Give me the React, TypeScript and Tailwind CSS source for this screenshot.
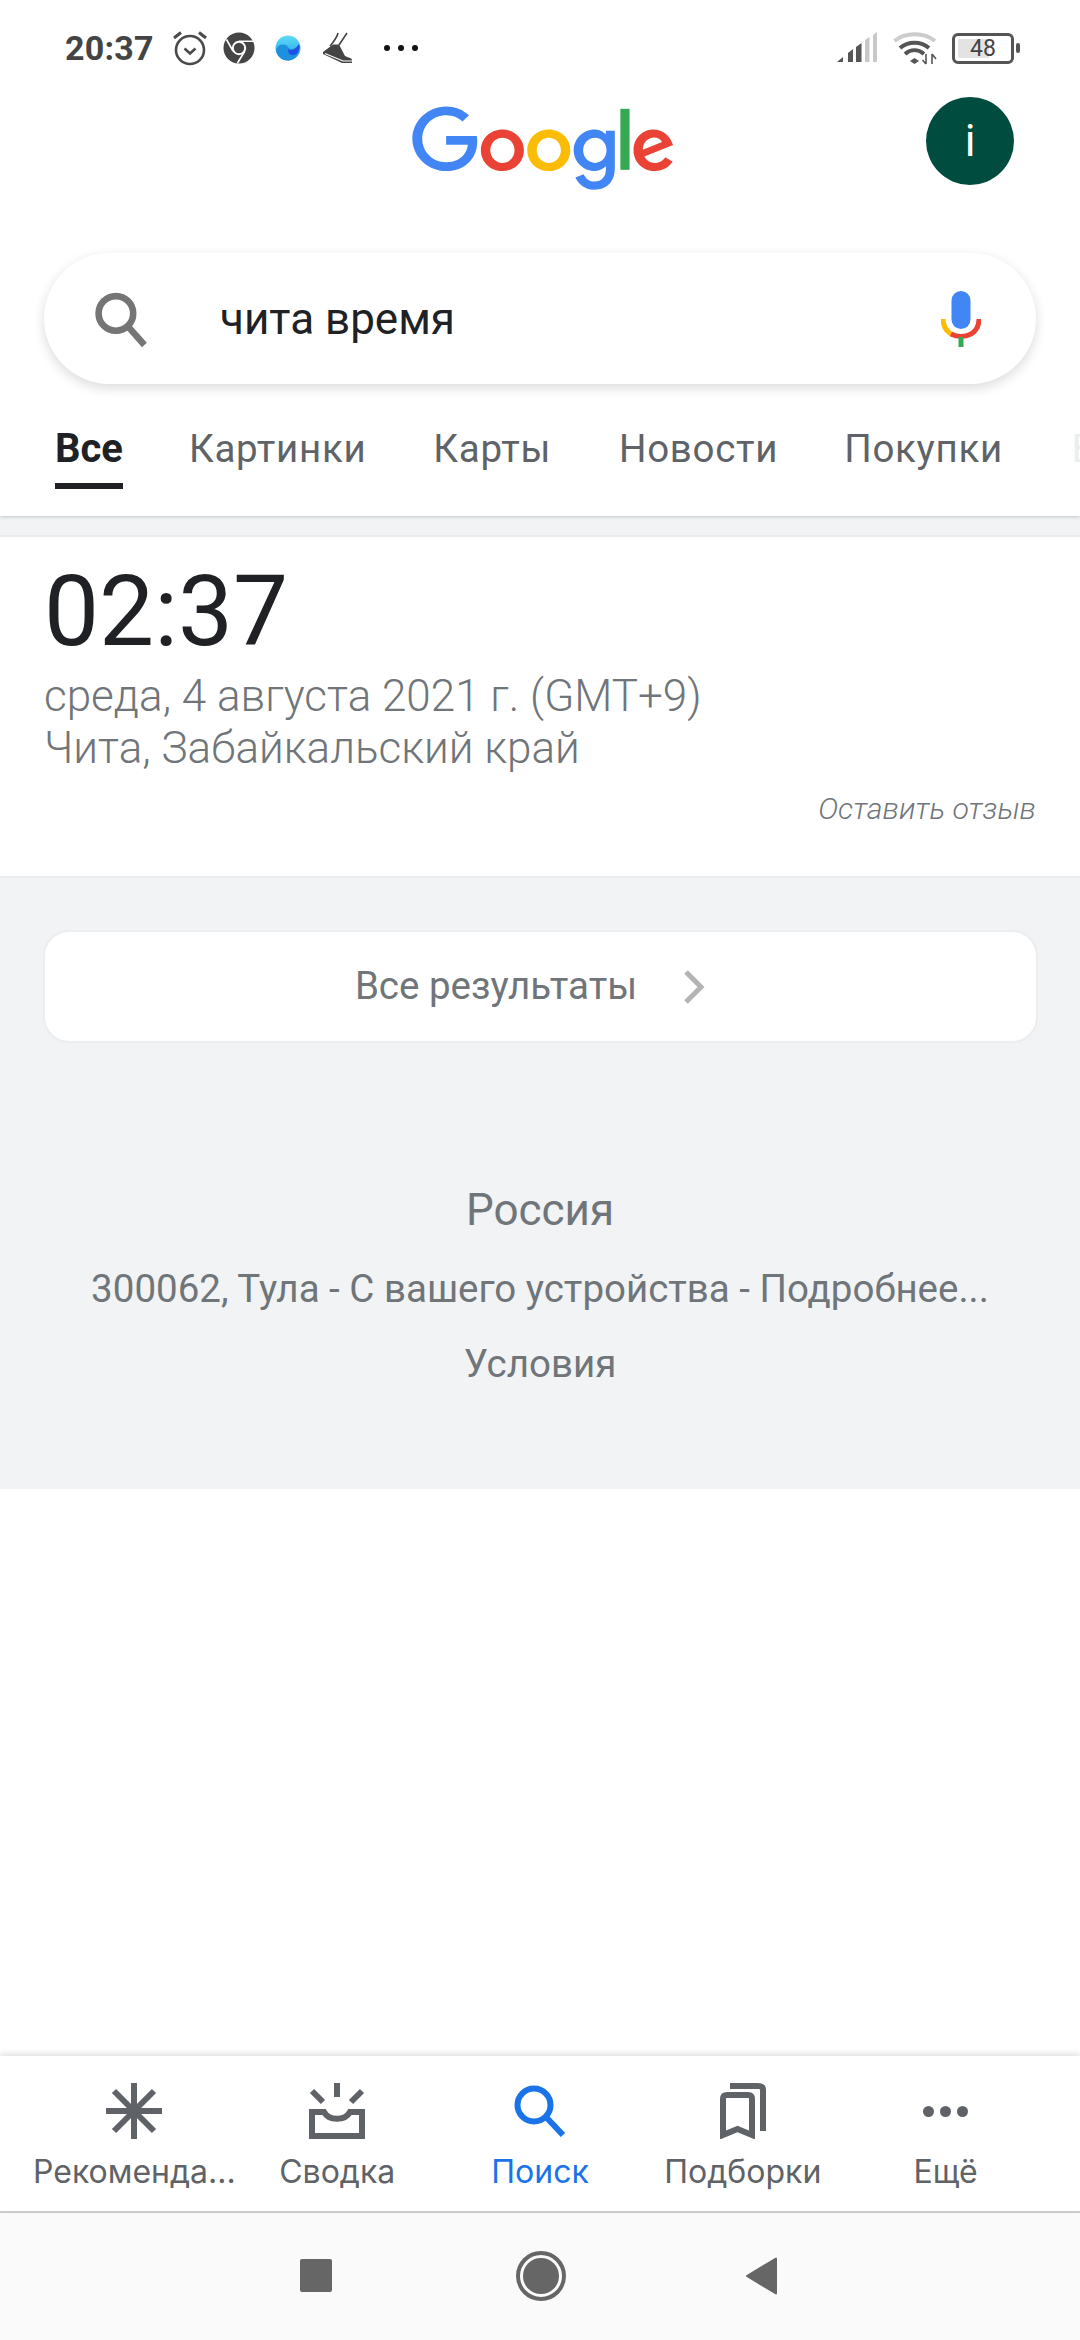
import React from "react";

function GoogleLogo() {
  return (
    <svg width="263" height="84" viewBox="0 0 272 89.5" preserveAspectRatio="none">
      <path fill="#EA4335" d="M115.75 47.18c0 12.77-9.99 22.18-22.25 22.18s-22.25-9.41-22.25-22.18C71.25 34.32 81.24 25 93.5 25s22.25 9.32 22.25 22.18zm-9.74 0c0-7.98-5.79-13.44-12.51-13.44S80.99 39.2 80.99 47.18c0 7.9 5.79 13.44 12.51 13.44s12.51-5.55 12.51-13.44z" />
      <path fill="#FBBC05" d="M163.75 47.18c0 12.77-9.99 22.18-22.25 22.18s-22.25-9.41-22.25-22.18c0-12.85 9.99-22.18 22.25-22.18s22.25 9.32 22.25 22.18zm-9.74 0c0-7.98-5.79-13.44-12.51-13.44s-12.51 5.46-12.51 13.44c0 7.9 5.79 13.44 12.51 13.44s12.51-5.55 12.51-13.44z" />
      <path fill="#4285F4" d="M209.75 26.34v39.82c0 16.38-9.66 23.07-21.08 23.07-10.75 0-17.22-7.19-19.66-13.07l8.48-3.53c1.51 3.61 5.21 7.87 11.17 7.87 7.31 0 11.84-4.51 11.84-13v-3.19h-.34c-2.18 2.69-6.38 5.04-11.68 5.04-11.09 0-21.25-9.66-21.25-22.09 0-12.52 10.16-22.26 21.25-22.26 5.29 0 9.49 2.35 11.68 4.96h.34v-3.61h9.25zm-8.56 20.92c0-7.81-5.21-13.52-11.84-13.52-6.72 0-12.35 5.71-12.35 13.52 0 7.73 5.63 13.36 12.35 13.36 6.63 0 11.84-5.63 11.84-13.36z" />
      <path fill="#34A853" d="M225 3v65h-9.5V3h9.5z" />
      <path fill="#EA4335" d="M262.02 54.48l7.56 5.04c-2.44 3.61-8.32 9.83-18.48 9.83-12.6 0-22.01-9.74-22.01-22.18 0-13.19 9.49-22.18 20.92-22.18 11.51 0 17.14 9.16 18.98 14.11l1.01 2.52-29.65 12.28c2.27 4.45 5.8 6.72 10.75 6.72 4.96 0 8.4-2.44 10.92-6.14zm-23.27-7.98l19.82-8.23c-1.09-2.77-4.37-4.7-8.23-4.7-4.95 0-11.84 4.37-11.59 12.93z" />
      <path fill="#4285F4" d="M35.29 41.41V32H67c.31 1.64.47 3.58.47 5.68 0 7.06-1.93 15.79-8.15 22.01-6.05 6.3-13.78 9.66-24.02 9.66C16.32 69.35.36 53.89.36 34.91.36 15.93 16.32.47 35.3.47c10.5 0 17.98 4.12 23.6 9.49l-6.64 6.64c-4.03-3.78-9.49-6.72-16.97-6.72-13.86 0-24.7 11.17-24.7 25.03 0 13.86 10.84 25.03 24.7 25.03 8.99 0 14.11-3.61 17.39-6.89 2.66-2.66 4.41-6.46 5.1-11.65l-22.49.01z" />
    </svg>
  );
}

function StatusLeft() {
  return (
    <div className="flex items-center">
      <span className="text-[34px] font-bold text-[#444444] leading-none tracking-[0.2px]">20:37</span>
      <svg className="ml-[18px]" width="36" height="36" viewBox="0 0 36 36" fill="none" stroke="#4a4a4a">
        <circle cx="18" cy="20" r="14" strokeWidth="2.6" />
        <path d="M12.5 18.5 L18 23.5 L23.5 18.5" strokeWidth="2.6" />
        <path d="M2 8 L9 2.5 M34 8 L27 2.5" strokeWidth="3" />
      </svg>
      <svg className="ml-[15px]" width="32" height="32" viewBox="0 0 32 32">
        <circle cx="16" cy="16" r="15.5" fill="#454545" />
        <circle cx="16" cy="16" r="6.2" fill="#454545" stroke="#ffffff" strokeWidth="2" />
        <path d="M16 9.2 H30 M10 19 L3.5 7.5 M21.6 19.5 L14.5 31" stroke="#ffffff" strokeWidth="1.6" fill="none" />
      </svg>
      <svg className="ml-[20px]" width="26" height="26" viewBox="0 0 26 26">
        <defs>
          <linearGradient id="w" x1="0" y1="0" x2="0" y2="1">
            <stop offset="0" stopColor="#5fdcf5" />
            <stop offset="1" stopColor="#1c9ee8" />
          </linearGradient>
        </defs>
        <circle cx="13" cy="13" r="12.5" fill="url(#w)" />
        <path d="M1 15 C3 9 10 8 13 12 C15 15 19 15 25 10 C25 20 19 25.5 13 25.5 C6 25.5 2 21 1 15Z" fill="#1f8fe0" />
        <path d="M13 14 C16 17 21 14 24 9 C25.5 15 22 21 17 20 C14 19.5 13 17 13 14Z" fill="#1f4fe8" />
      </svg>
      <svg className="ml-[22px]" width="30" height="33" viewBox="0 0 30 33" fill="none">
        <path d="M15 1 C14 6 11 9 7 14 M24 1 L16 13" stroke="#444444" strokeWidth="1.6" />
        <path d="M0 20 L10 12.5 H16 L22 24 C25 25.5 29 26 29 28 V31 H19 L0 22 Z" fill="#444444" />
        <path d="M2 21.5 L20 29 H29" stroke="#ffffff" strokeWidth="1.1" />
      </svg>
      <div className="ml-[31px] flex gap-[8px]">
        <div className="w-[6px] h-[6px] rounded-full bg-[#111111]" />
        <div className="w-[6px] h-[6px] rounded-full bg-[#111111]" />
        <div className="w-[6px] h-[6px] rounded-full bg-[#111111]" />
      </div>
    </div>
  );
}

function StatusRight() {
  return (
    <div className="flex items-center">
      <svg width="42" height="32" viewBox="0 0 42 32">
        <path d="M1 30 L7 25 V30 Z" fill="#555555" />
        <path d="M12 30 V21 L17 17 V30 Z" fill="#555555" />
        <path d="M20 30 V15 L25.5 11 V30 Z" fill="#555555" />
        <path d="M29 30 V8 L33.5 5 V30 Z" fill="#c8c8c8" />
        <path d="M37 30 V3 L41 0 V30 Z" fill="#c8c8c8" />
      </svg>
      <svg className="ml-[15px]" width="44" height="34" viewBox="0 0 44 34" fill="none">
        <path d="M1.5 10 C12 1 31 1 42 10" stroke="#cccccc" strokeWidth="4" />
        <path d="M7 17 C15 10 28 10 36 17" stroke="#555555" strokeWidth="4" />
        <path d="M12 23 C18 18 25 18 31 23" stroke="#555555" strokeWidth="4" />
        <path d="M17 30 L21.5 27 L26 30 L21.5 33 Z" fill="#555555" />
        <path d="M33 23 V33 M29.5 29 L33 33 M39 33 V23 M39 23 L43 28" stroke="#555555" strokeWidth="1.6" />
      </svg>
      <div className="ml-[15px] w-[62px] h-[31px] rounded-[6px] border-[3.5px] border-[#555555] flex items-center p-[3px]">
        <div className="h-full w-full bg-[linear-gradient(90deg,#e3e3e3_62%,transparent_62%)] rounded-[2px] flex items-center justify-center">
          <span className="text-[23px] leading-none text-[#444444]">48</span>
        </div>
      </div>
      <div className="ml-[2px] w-[4px] h-[10px] rounded-[2px] bg-[#555555]" />
    </div>
  );
}

function NavItem({ label, icon, active }: { label: string; icon: React.ReactNode; active?: boolean }) {
  return (
    <div className="flex flex-col items-center">
      <div className="h-[56px] flex items-center justify-center">{icon}</div>
      <span
        className={
          "mt-[14px] text-[32px] leading-[38px] whitespace-nowrap font-['Inter'] font-normal " +
          (active ? "text-[#1a73e8]" : "text-[#5f6368]")
        }
      >
        {label}
      </span>
    </div>
  );
}

export default function App() {
  return (
    <div className="w-[1080px] h-[2340px] flex flex-col bg-white overflow-hidden font-['Roboto',sans-serif]">
      <header className="relative z-10 h-[516px] shrink-0 bg-white flex flex-col shadow-[0_1px_3px_rgba(60,64,67,0.25)]">
        <div className="h-[96px] shrink-0 flex items-center justify-between pl-[65px] pr-[60px]">
          <StatusLeft />
          <StatusRight />
        </div>
        <div className="h-[98px] shrink-0 flex items-start justify-between pl-[412px] pr-[66px] pt-[1px]">
          <div className="pt-[9px]">
            <GoogleLogo />
          </div>
          <div className="w-[88px] h-[88px] rounded-full bg-[#004d40] flex items-center justify-center">
            <span className="text-white text-[44px] leading-none">i</span>
          </div>
        </div>
        <div className="mt-[59px] mx-[44px] h-[131px] shrink-0 rounded-[66px] bg-white shadow-[0_4px_12px_rgba(32,33,36,0.16)] flex items-center pl-[49px] pr-[55px]">
          <svg width="58" height="57" viewBox="0 0 56 56" fill="none" stroke="#757575" strokeWidth="6.5">
            <circle cx="22" cy="23" r="17" />
            <path d="M34 36 L50 54" />
          </svg>
          <span className="ml-[69px] text-[44px] text-[#202124] leading-none">чита время</span>
          <svg className="ml-auto" width="40" height="56" viewBox="0 0 40 56" fill="none">
            <rect x="10.5" y="0" width="19" height="38" rx="9.5" fill="#4285f4" />
            <path d="M2 28 C2 36 6 41 12 44" stroke="#fbbc05" strokeWidth="5" />
            <path d="M10 43 C16 46 24 46 30 43 C35 40 38 35 38 28" stroke="#ea4335" strokeWidth="5" />
            <path d="M20 46 V56" stroke="#34a853" strokeWidth="5" />
          </svg>
        </div>
        <div className="mt-[28px] flex h-[105px] overflow-hidden pl-[55px] text-[38.5px] leading-[48px] font-[450] text-[#5f6368] whitespace-nowrap tracking-[0.7px]">
          <div className="flex flex-col items-stretch">
            <span className="pt-[13px] text-[40px] text-[#202124] font-bold tracking-normal">Все</span>
            <div className="mt-[10px] h-[6px] bg-[#202124]" />
          </div>
          <span className="ml-[66px] pt-[13px]">Картинки</span>
          <span className="ml-[67px] pt-[13px]">Карты</span>
          <span className="ml-[68px] pt-[13px]">Новости</span>
          <span className="ml-[66px] pt-[13px]">Покупки</span>
          <span className="ml-[69px] pt-[13px] text-[#eceded]">Видео</span>
        </div>
      </header>

      <div className="h-[21px] shrink-0 bg-[#f1f3f4] border-b-2 border-[#e9ebed]" />

      <section className="h-[339px] shrink-0 bg-white flex flex-col px-[44px]">
        <div className="mt-[19px] text-[98px] leading-[112px] text-[#202124]">02:37</div>
        <div className="mt-[2px] text-[44px] leading-[52px] font-light text-[#70757a]">
          <div>среда, 4 августа 2021 г. (GMT+9)</div>
          <div>Чита, Забайкальский край</div>
        </div>
        <div className="mt-[15px] text-right text-[30.25px] leading-[40px] italic font-light text-[#70757a]">
          Оставить отзыв
        </div>
      </section>

      <section className="h-[613px] shrink-0 bg-[#f1f3f4] border-t-2 border-[#e9ebed] flex flex-col items-center">
        <div className="mt-[52px] w-[995px] h-[113px] pr-[20px] rounded-[26px] bg-white border-2 border-[#ebedef] flex items-center justify-center">
          <span className="text-[38.5px] text-[#70757a] leading-none">Все результаты</span>
          <svg className="ml-[46px]" width="22" height="34" viewBox="0 0 22 34" fill="none" stroke="#b2b4b6" strokeWidth="5">
            <path d="M3 2 L18 17 L3 32" />
          </svg>
        </div>
        <div className="mt-[142px] text-[44px] leading-[50px] text-[#70757a]">Россия</div>
        <div className="mt-[29px] text-[38.5px] leading-[50px] text-[#70757a]">
          300062, Тула - С вашего устройства - Подробнее...
        </div>
        <div className="mt-[25px] text-[38.5px] leading-[50px] text-[#70757a]">Условия</div>
      </section>

      <main className="flex-1 bg-white" />

      <nav className="relative h-[155px] shrink-0 bg-white px-[33px] pt-[27px] grid grid-cols-5 shadow-[0_-2px_6px_rgba(60,64,67,0.18)]">
        <NavItem
          label="Рекоменда..."
          icon={
            <svg width="56" height="56" viewBox="0 0 56 56" fill="none" stroke="#5f6368" strokeWidth="6">
              <path d="M28 0 V56 M0 28 H56 M8 8 L48 48 M48 8 L8 48" />
            </svg>
          }
        />
        <NavItem
          label="Сводка"
          icon={
            <svg width="56" height="56" viewBox="0 0 56 56" fill="none" stroke="#5f6368" strokeWidth="6">
              <path d="M28 0 V14 M3 8 L14 19 M53 8 L42 19" />
              <path d="M3 29 H15 C20 38 36 38 41 29 H53 V53 H3 Z" />
            </svg>
          }
        />
        <NavItem
          active
          label="Поиск"
          icon={
            <svg width="52" height="52" viewBox="0 0 52 52" fill="none" stroke="#1a73e8" strokeWidth="6">
              <circle cx="20" cy="20" r="16.5" />
              <path d="M32 32 L49 50" />
            </svg>
          }
        />
        <NavItem
          label="Подборки"
          icon={
            <svg width="46" height="56" viewBox="0 0 46 56" fill="none" stroke="#5f6368" strokeWidth="6">
              <path d="M3 52 V16 C3 13 4 12 7 12 H28 C31 12 32 13 32 16 V52 L17.5 46 Z" />
              <path d="M10 3 H38 C41 3 43 4 43 7 V48" />
            </svg>
          }
        />
        <NavItem
          label="Ещё"
          icon={
            <div className="flex gap-[6px]">
              <div className="w-[11px] h-[11px] rounded-full bg-[#5f6368]" />
              <div className="w-[11px] h-[11px] rounded-full bg-[#5f6368]" />
              <div className="w-[11px] h-[11px] rounded-full bg-[#5f6368]" />
            </div>
          }
        />
      </nav>

      <footer className="h-[129px] shrink-0 bg-[#fafafa] border-t-2 border-[#cfcfcf] flex items-center pb-[2px]">
        <div className="ml-[300px] w-[32px] h-[33px] rounded-[2px] bg-[#666666]" />
        <div className="ml-[184px] w-[50px] h-[50px] rounded-full border-[4px] border-[#666666] p-[3px]">
          <div className="w-full h-full rounded-full bg-[#666666]" />
        </div>
        <svg className="ml-[179px]" width="33" height="38" viewBox="0 0 33 38">
          <path d="M31 1.5 V36.5 L2 19 Z" fill="#666666" stroke="#666666" strokeWidth="2" strokeLinejoin="round" />
        </svg>
      </footer>
    </div>
  );
}
